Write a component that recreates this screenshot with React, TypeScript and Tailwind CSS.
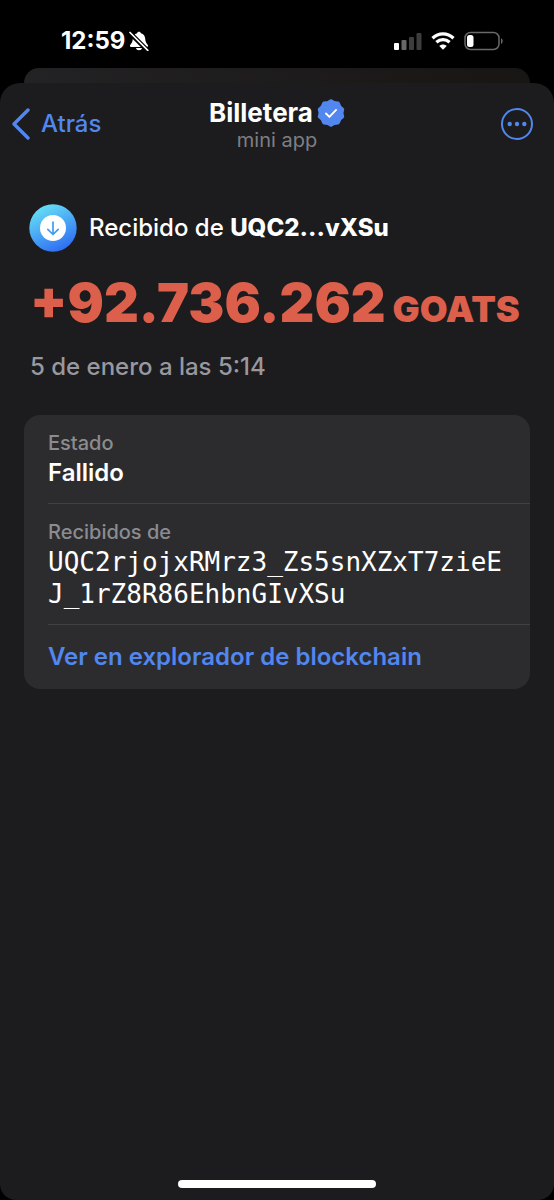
import type { ReactNode } from "react";

function StatusBar() {
  return (
    <div className="flex h-[68px] items-center justify-between pt-4 pr-[50px] pb-0.5 pl-[61px]">
      <div className="flex items-center gap-1">
        <span className="text-[24px] leading-7 font-bold text-white">12:59</span>
        <svg width="20" height="20" viewBox="0 0 20 20" aria-hidden="true">
          <path
            d="M10 0.8c-0.900 0-1.700 0.600-1.900 1.400C5.300 3 3.900 5 3.800 7.800 3.700 11 2.400 12.500 1.200 14c-0.700 0.900-0.200 2 1 2h15.600c1.200 0 1.700-1.100 1-2-1.200-1.500-2.500-3-2.600-6.200-0.100-2.800-1.500-4.800-4.300-5.600C11.700 1.400 10.900 0.800 10 0.800ZM7 17.100h6c-0.300 1.400-1.500 2.200-3 2.200s-2.700-0.800-3-2.200Z"
            fill="#fff"
          />
          <path d="M0.500 1.500 18.500 19.500" stroke="#000" strokeWidth="4.600" />
          <path d="M1 1.500 18.800 19.300" stroke="#fff" strokeWidth="1.700" strokeLinecap="round" />
        </svg>
      </div>
      <div className="flex items-center gap-[9px]">
        <svg width="28" height="18" viewBox="0 0 28 18" aria-hidden="true">
          <rect x="0" y="11" width="5" height="7" rx="1" fill="#fff" />
          <rect x="7.500" y="8" width="5" height="10" rx="1" fill="#686868" />
          <rect x="15" y="5" width="5" height="13" rx="1" fill="#3d3d3d" />
          <rect x="22.500" y="1" width="5" height="17" rx="1" fill="#3d3d3d" />
        </svg>
        <svg width="24" height="18" viewBox="0 0 24 18" fill="none" aria-hidden="true">
          <path d="M1.500 6.200C7.500 0.500 16.500 0.500 22.500 6.200" stroke="#fff" strokeWidth="3.300" />
          <path d="M5.400 10.300c3.800-3.500 9.400-3.500 13.200 0" stroke="#fff" strokeWidth="3.200" />
          <path d="M8.300 13.900c2.100-2 5.300-2 7.400 0L12 17.800Z" fill="#fff" />
        </svg>
        <svg width="40" height="20" viewBox="0 0 40 20" aria-hidden="true">
          <rect x="1" y="1.500" width="34" height="17" rx="5.500" fill="none" stroke="#686868" strokeWidth="1.500" />
          <rect x="3" y="4" width="6.500" height="12" rx="2.500" fill="#fff" />
          <path d="M37 7.200c2.200 0.800 2.200 4.800 0 5.600Z" fill="#686868" />
        </svg>
      </div>
    </div>
  );
}

function VerifiedBadge() {
  return (
    <svg width="28" height="28" viewBox="0 0 28 28" fill="none" aria-hidden="true">
      <path
        d="M14 2.200 17.200 4.100 20.900 4.500 22.400 7.900 25.200 10.400 24.400 14 25.200 17.600 22.400 20.100 20.900 23.500 17.200 23.900 14 25.800 10.800 23.900 7.100 23.500 5.600 20.100 2.800 17.600 3.600 14 2.800 10.400 5.600 7.900 7.100 4.500 10.800 4.100Z"
        fill="#5187ef"
        stroke="#5187ef"
        strokeWidth="4"
        strokeLinejoin="round"
      />
      <path d="m9 14.500 3.400 3.400 6.700-7" stroke="#fff" strokeWidth="1.900" strokeLinecap="round" strokeLinejoin="round" />
    </svg>
  );
}

function Header() {
  return (
    <header className="grid grid-cols-[1fr_auto_1fr] items-center px-3 pt-[14px]">
      <button type="button" className="flex items-center gap-[11px] justify-self-start text-[#5187ef]">
        <svg width="18" height="32" viewBox="0 0 18 32" fill="none" aria-hidden="true">
          <path d="M16 2 2 16l14 14" stroke="currentColor" strokeWidth="3.400" strokeLinecap="round" strokeLinejoin="round" />
        </svg>
        <span className="text-[24px] leading-8 font-medium">Atrás</span>
      </button>
      <div className="flex flex-col items-center">
        <div className="flex items-center gap-1">
          <h1 className="text-[26px] leading-8 font-bold text-white">Billetera</h1>
          <VerifiedBadge />
        </div>
        <p className="text-[20px] leading-[22px] text-[#7f7f83]">mini app</p>
      </div>
      <button type="button" aria-label="Más opciones" className="mr-2 justify-self-end text-[#5187ef]">
        <svg width="34" height="34" viewBox="0 0 34 34" fill="none" aria-hidden="true">
          <circle cx="17" cy="17" r="15" stroke="currentColor" strokeWidth="2" />
          <circle cx="9.700" cy="17" r="2.200" fill="currentColor" />
          <circle cx="17" cy="17" r="2.200" fill="currentColor" />
          <circle cx="24.300" cy="17" r="2.200" fill="currentColor" />
        </svg>
      </button>
    </header>
  );
}

function ReceivedIcon() {
  return (
    <svg width="48" height="48" viewBox="0 0 48 48" fill="none" aria-hidden="true">
      <defs>
        <linearGradient id="coin" x1="12" y1="2" x2="34" y2="46" gradientUnits="userSpaceOnUse">
          <stop stopColor="#65e0f6" />
          <stop offset="1" stopColor="#2f6df3" />
        </linearGradient>
      </defs>
      <circle cx="24" cy="24" r="23.700" fill="url(#coin)" />
      <circle cx="24" cy="24" r="13" fill="#fff" />
      <path d="M24 18v12M18.800 25.300 24 30.500l5.200-5.200" stroke="#439bf2" strokeWidth="1.700" strokeLinecap="round" strokeLinejoin="round" />
    </svg>
  );
}

function Row({ label, children }: { label: string; children: ReactNode }) {
  return (
    <div className="ml-6 border-b border-[#414143] pt-4 pr-6 pb-3">
      <dt className="text-[20px] leading-6 font-medium text-[#8b8b90]">{label}</dt>
      <dd className="text-white">{children}</dd>
    </div>
  );
}

export default function App() {
  return (
    <div className="flex min-h-screen flex-col bg-black font-['Inter',sans-serif]">
      <StatusBar />
      <div className="mx-6 h-[15px] rounded-t-2xl bg-linear-to-r from-[#232224] to-[#181614]" />
      <div className="flex grow flex-col rounded-t-[20px] rounded-b-2xl bg-[#1c1c1e]">
        <Header />
        <main className="px-6 pt-[53px]">
          <div className="flex items-center gap-3 pl-[5px]">
            <ReceivedIcon />
            <p className="text-[24px] leading-8 font-medium text-white">
              Recibido de <strong className="font-extrabold">UQC2...vXSu</strong>
            </p>
          </div>
          <p className="mt-5 pl-1.5 text-[54px] leading-[62px] font-black whitespace-nowrap text-[#db5f4b]">
            +92.736.262 <span className="-ml-1 text-[36px]">GOATS</span>
          </p>
          <p className="mt-[11px] pl-1.5 text-[24px] leading-8 font-medium text-[#98989e]">5 de enero a las 5:14</p>
          <section className="mt-8 rounded-2xl bg-[#2c2c2e]">
            <dl>
              <Row label="Estado">
                <span className="block text-[24px] leading-9 font-semibold">Fallido</span>
              </Row>
              <Row label="Recibidos de">
                <span className="block py-0.5 font-['DejaVu_Sans_Mono',monospace] text-[26px] leading-8 break-all">
                  UQC2rjojxRMrz3_Zs5snXZxT7zieEJ_1rZ8R86EhbnGIvXSu
                </span>
              </Row>
            </dl>
            <a href="#explorador" className="block px-6 py-4 text-[24px] leading-8 font-semibold text-[#5187ef]">
              Ver en explorador de blockchain
            </a>
          </section>
        </main>
        <div className="mx-auto mt-auto mb-3 h-2 w-[198px] rounded-full bg-white" />
      </div>
    </div>
  );
}
